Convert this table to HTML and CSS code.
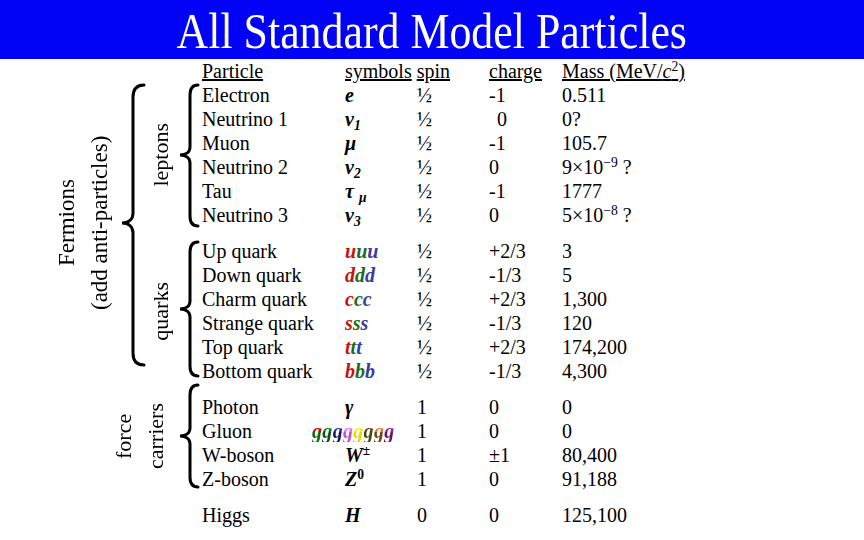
FILE: index.html
```html
<!DOCTYPE html>
<html>
<head>
<meta charset="utf-8">
<link rel="stylesheet" href="styles.css">
</head>
<body>
<header class="banner"><h1 class="title"><span>All Standard Model Particles</span></h1></header>
<main class="chart">
  <div class="side">
    <div class="vlabel fermions">Fermions<br>(add anti-particles)</div>
    <svg class="brace brace-fermions" width="30" height="284" viewBox="0 0 30 284"><path d="M28,2 C21,2 17,6 17,14 L17,130 C17,136 13,140 6,140 C13,140 17,144 17,150 L17,270 C17,278 21,282 28,282"/></svg>
    <div class="vlabel sub leptons">leptons</div>
    <svg class="brace brace-leptons" width="24" height="145" viewBox="0 0 24 145"><path d="M22,2 C16,2 14,6 14,12 L14,64 C14,69 10,72 4,72 C10,72 14,75 14,80 L14,133 C14,139 16,143 22,143"/></svg>
    <div class="vlabel sub quarks">quarks</div>
    <svg class="brace brace-quarks" width="24" height="138" viewBox="0 0 24 138"><path d="M22,2 C16,2 14,6 14,12 L14,61 C14,66 10,69 4,69 C10,69 14,72 14,77 L14,126 C14,132 16,136 22,136"/></svg>
    <div class="vlabel force">force<br>carriers</div>
    <svg class="brace brace-force" width="24" height="106" viewBox="0 0 24 106"><path d="M22,2 C16,2 14,6 14,12 L14,45 C14,50 10,53 4,53 C10,53 14,56 14,61 L14,94 C14,100 16,104 22,104"/></svg>
  </div>
  <div class="table">
    <div class="row head">
      <span><u>Particle</u></span>
      <span><u>symbols</u> <u>spin</u></span>
      <span></span>
      <span><u>charge</u></span>
      <span><u>Mass (MeV/<i>c</i><sup>2</sup>)</u></span>
    </div>
    <div class="group">
      <div class="row"><span>Electron</span><span class="sym">e</span><span>½</span><span>-1</span><span>0.511</span></div>
      <div class="row"><span>Neutrino 1</span><span class="sym">ν<sub>1</sub></span><span>½</span><span class="ind"> 0</span><span>0?</span></div>
      <div class="row"><span>Muon</span><span class="sym">μ</span><span>½</span><span>-1</span><span>105.7</span></div>
      <div class="row"><span>Neutrino 2</span><span class="sym">ν<sub>2</sub></span><span>½</span><span>0</span><span>9×10<sup>−9</sup> ?</span></div>
      <div class="row"><span>Tau</span><span class="sym">τ <sub>μ</sub></span><span>½</span><span>-1</span><span>1777</span></div>
      <div class="row"><span>Neutrino 3</span><span class="sym">ν<sub>3</sub></span><span>½</span><span>0</span><span>5×10<sup>−8</sup> ?</span></div>
    </div>
    <div class="group">
      <div class="row"><span>Up quark</span><span class="sym"><b class="qr">u</b><b class="qg">u</b><b class="qb">u</b></span><span>½</span><span>+2/3</span><span>3</span></div>
      <div class="row"><span>Down quark</span><span class="sym"><b class="qr">d</b><b class="qg">d</b><b class="qb">d</b></span><span>½</span><span>-1/3</span><span>5</span></div>
      <div class="row"><span>Charm quark</span><span class="sym"><b class="qr">c</b><b class="qg">c</b><b class="qb">c</b></span><span>½</span><span>+2/3</span><span>1,300</span></div>
      <div class="row"><span>Strange quark</span><span class="sym"><b class="qr">s</b><b class="qg">s</b><b class="qb">s</b></span><span>½</span><span>-1/3</span><span>120</span></div>
      <div class="row"><span>Top quark</span><span class="sym"><b class="qr">t</b><b class="qg">t</b><b class="qb">t</b></span><span>½</span><span>+2/3</span><span>174,200</span></div>
      <div class="row"><span>Bottom quark</span><span class="sym"><b class="qr">b</b><b class="qg">b</b><b class="qb">b</b></span><span>½</span><span>-1/3</span><span>4,300</span></div>
    </div>
    <div class="group">
      <div class="row"><span>Photon</span><span class="sym">γ</span><span>1</span><span>0</span><span>0</span></div>
      <div class="row"><span>Gluon</span><span class="sym gluon"><b class="g1">g</b><b class="g2">g</b><b class="g3">g</b><b class="g4">g</b><b class="g5">g</b><b class="g6">g</b><b class="g7">g</b><b class="g8">g</b></span><span>1</span><span>0</span><span>0</span></div>
      <div class="row"><span>W-boson</span><span class="sym">W<sup class="up">±</sup></span><span>1</span><span>±1</span><span>80,400</span></div>
      <div class="row"><span>Z-boson</span><span class="sym">Z<sup class="up">0</sup></span><span>1</span><span>0</span><span>91,188</span></div>
    </div>
    <div class="group">
      <div class="row"><span>Higgs</span><span class="sym">H</span><span>0</span><span>0</span><span>125,100</span></div>
    </div>
  </div>
</main>
</body>
</html>
```
FILE: styles.css
```css
* { box-sizing: border-box; }
html, body {
  margin: 0;
  padding: 0;
  background: #ffffff;
  width: 864px;
  height: 540px;
  overflow: hidden;
  font-family: "Liberation Serif", "Times New Roman", serif;
  color: #000;
}
.banner {
  height: 59px;
  background: #0202f6;
  display: flex;
  justify-content: center;
}
.title {
  margin: 0;
  font-weight: normal;
  font-size: 51px;
  line-height: 62px;
  color: #fff;
  white-space: nowrap;
}
.title span {
  display: inline-block;
  transform: scaleX(0.86);
}
.chart {
  display: flex;
  align-items: flex-start;
}
.side {
  flex: none;
  width: 202px;
  display: grid;
  grid-template-columns: 50px 66px 30px 30px 24px 2px;
  grid-template-rows: 24px 144px 12px 144px 12px 108px;
}
.vlabel {
  writing-mode: vertical-rl;
  transform: rotate(180deg);
  text-align: center;
  font-size: 23px;
  line-height: 33px;
  white-space: nowrap;
}
.fermions {
  grid-column: 2;
  grid-row: 2 / 5;
  align-self: start;
  height: 280px;
  justify-self: center;
}
.brace {
  fill: none;
  stroke: #000;
  stroke-width: 3;
  stroke-linecap: round;
  align-self: start;
}
.brace-fermions { grid-column: 3; grid-row: 2 / 5; }
.sub {
  grid-column: 4;
  justify-self: center;
  align-self: center;
  line-height: 28px;
  font-size: 22px;
}
.leptons { grid-row: 2; }
.quarks { grid-row: 4; }
.brace-leptons { grid-column: 5; grid-row: 2; }
.brace-quarks { grid-column: 5; grid-row: 4; margin-top: 1px; }
.force {
  grid-column: 3 / 5;
  grid-row: 5 / 7;
  justify-self: end;
  margin-right: 4px;
  align-self: start;
  height: 106px;
  font-size: 22px;
  line-height: 32px;
}
.brace-force { grid-column: 5; grid-row: 5 / 7; }

.table {
  flex: none;
  display: flex;
  flex-direction: column;
  font-size: 20px;
  line-height: 24px;
}
.group + .group { margin-top: 12px; }
.row {
  display: grid;
  grid-template-columns: 143px 72px 72px 73px 200px;
  height: 24px;
  white-space: pre;
}
.head span:nth-child(2) { grid-column: 2 / 4; }
.head span:nth-child(3) { display: none; }
.sym {
  font-weight: bold;
  font-style: italic;
}
.sym b { font-weight: bold; }
sup, sub {
  line-height: 0;
  font-size: 0.68em;
  position: relative;
  vertical-align: baseline;
}
sup { top: -0.5em; }
sub { top: 0.3em; }
.up { font-style: normal; }
.ind { padding-left: 3px; }
.qr { color: #c81010; }
.qg { color: #1a6e1a; }
.qb { color: #3b3ba0; }
.gluon {
  margin-left: -33px;
  letter-spacing: 0.3px;
}
.gluon b {
  -webkit-background-clip: text;
  background-clip: text;
  color: transparent;
}
.g1 { background-image: linear-gradient(#d40000 55%, #0c6a0c 55%); }
.g2 { background-image: linear-gradient(#0b7a0b 55%, #0c4d1a 55%); }
.g3 { background-image: linear-gradient(#2a2aa8 55%, #14145e 55%); }
.g4 { background-image: linear-gradient(#e070e0 55%, #c050c8 55%); }
.g5 { background-image: linear-gradient(#f0e820 55%, #e8d800 55%); }
.g6 { background-image: linear-gradient(#6a3a10 55%, #3a4a10 55%); }
.g7 { background-image: linear-gradient(#d08030 55%, #7a4010 55%); }
.g8 { background-image: linear-gradient(#8a2a8a 55%, #6a106a 55%); }
```
